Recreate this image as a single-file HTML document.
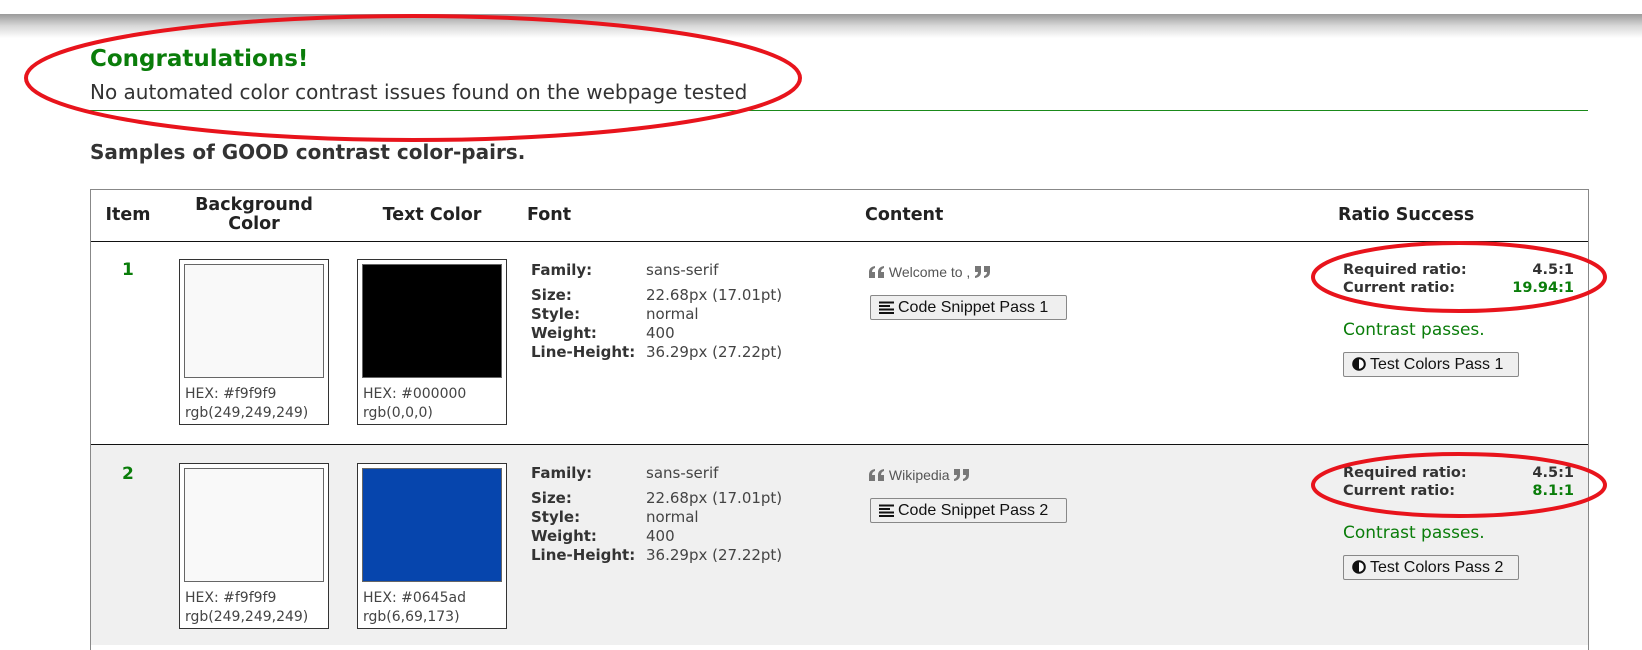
<!DOCTYPE html>
<html><head><meta charset="utf-8"><style>
body{margin:0;width:1642px;height:644px;overflow:hidden;background:#fff;position:relative;font-family:"DejaVu Sans","Liberation Sans",sans-serif;color:#333}
.a{position:absolute;white-space:nowrap}
.band{position:absolute;left:0;top:14px;width:1642px;height:24px;background:linear-gradient(#9a9a9a,#d8d8d8 50%,#fff)}
.h{font-weight:bold;font-size:17.5px;color:#222;text-align:center;line-height:19px}
.box{position:absolute;width:148px;height:164px;border:1px solid #333;background:#fff}
.sw{position:absolute;left:4px;top:4px;width:138px;height:112px;border:1px solid #666}
.box .t{position:absolute;left:5px;font-size:14px;color:#444}
.lab{font-weight:bold;font-size:15px;color:#333}
.val{font-size:15px;color:#444}
.btn{position:absolute;height:25px;border:1px solid #888;border-radius:2px;background:#efefef;font-family:"Liberation Sans",sans-serif;font-size:16px;color:#111;line-height:24px;box-sizing:border-box;padding-left:8px}
.btn svg{vertical-align:-2px;margin-right:4px}
.q{font-family:"Liberation Sans",sans-serif;font-size:14px;color:#555}
.q svg{vertical-align:-1px}
.r{font-weight:bold;font-size:14.5px;color:#333}
</style></head><body>
<div class="band"></div>
<div class="a" style="left:90px;top:46px;font-size:23px;font-weight:bold;color:#0a7d0a">Congratulations!</div>
<div class="a" style="left:90px;top:80px;font-size:20px;color:#333">No automated color contrast issues found on the webpage tested</div>
<div class="a" style="left:90px;top:110px;width:1498px;height:1px;background:#1a8a1a"></div>
<div class="a" style="left:90px;top:140px;font-size:20px;font-weight:bold;color:#333">Samples of GOOD contrast color-pairs.</div>

<div class="a" style="left:90px;top:189px;width:1497px;height:460px;border:1px solid #888;border-bottom:none"></div>
<div class="a" style="left:91px;top:241px;width:1497px;height:1px;background:#111"></div>
<div class="a" style="left:91px;top:444px;width:1497px;height:1px;background:#111"></div>
<div class="a" style="left:91px;top:445px;width:1497px;height:200px;background:#f0f0f0"></div>

<div class="a h" style="left:98px;top:206px;width:60px">Item</div>
<div class="a h" style="left:184px;top:196px;width:140px">Background<br>Color</div>
<div class="a h" style="left:370px;top:206px;width:124px">Text Color</div>
<div class="a h" style="left:527px;top:206px;text-align:left">Font</div>
<div class="a h" style="left:865px;top:206px;text-align:left">Content</div>
<div class="a h" style="left:1338px;top:206px;text-align:left">Ratio Success</div>

<!-- row 1 -->
<div class="a" style="left:122px;top:260px;font-weight:bold;font-size:17px;color:#0a7d0a">1</div>
<div class="box" style="left:179px;top:259px"><div class="sw" style="background:#f9f9f9"></div><div class="t" style="top:126px">HEX: #f9f9f9</div><div class="t" style="top:145px">rgb(249,249,249)</div></div>
<div class="box" style="left:357px;top:259px"><div class="sw" style="background:#000"></div><div class="t" style="top:126px">HEX: #000000</div><div class="t" style="top:145px">rgb(0,0,0)</div></div>
<div class="a lab" style="left:531px;top:261px;line-height:19px">Family:<br><span style="display:block;height:6px"></span>Size:<br>Style:<br>Weight:<br>Line-Height:</div>
<div class="a val" style="left:646px;top:261px;line-height:19px">sans-serif<br><span style="display:block;height:6px"></span>22.68px (17.01pt)<br>normal<br>400<br>36.29px (27.22pt)</div>
<div class="a q" style="left:869px;top:264px"><svg width="16" height="12" viewBox="0 0 16 12"><path d="M0 12V6Q0 1 6 0V2Q3 3 3 6H6V12ZM9 12V6Q9 1 15 0V2Q12 3 12 6H15V12Z" fill="#777"/></svg> Welcome to , <svg width="16" height="12" viewBox="0 0 16 12"><path d="M1 0H7V6Q7 11 1 12V10Q4 9 4 6H1ZM10 0H16V6Q16 11 10 12V10Q13 9 13 6H10Z" fill="#777"/></svg></div>
<div class="btn" style="left:870px;top:295px;width:197px"><svg width="15" height="13"><path d="M0 1.5H15M0 5H11M0 8.5H15M0 12H15" stroke="#111" stroke-width="2"/></svg>Code Snippet Pass 1</div>
<div class="a r" style="left:1343px;top:262px">Required ratio:</div><div class="a r" style="left:1500px;top:262px;width:74px;text-align:right">4.5:1</div>
<div class="a r" style="left:1343px;top:280px">Current ratio:</div><div class="a r" style="left:1489px;top:280px;width:85px;text-align:right;color:#0a7d0a">19.94:1</div>
<div class="a" style="left:1343px;top:320px;font-size:17px;color:#0a7d0a">Contrast passes.</div>
<div class="btn" style="left:1343px;top:352px;width:176px"><svg width="14" height="14"><circle cx="7" cy="7" r="5.8" fill="#fff" stroke="#111" stroke-width="2"/><path d="M7 1A6 6 0 0 0 7 13Z" fill="#111"/></svg>Test Colors Pass 1</div>

<!-- row 2 -->
<div class="a" style="left:122px;top:464px;font-weight:bold;font-size:17px;color:#0a7d0a">2</div>
<div class="box" style="left:179px;top:463px"><div class="sw" style="background:#f9f9f9"></div><div class="t" style="top:126px">HEX: #f9f9f9</div><div class="t" style="top:145px">rgb(249,249,249)</div></div>
<div class="box" style="left:357px;top:463px"><div class="sw" style="background:#0645ad"></div><div class="t" style="top:126px">HEX: #0645ad</div><div class="t" style="top:145px">rgb(6,69,173)</div></div>
<div class="a lab" style="left:531px;top:464px;line-height:19px">Family:<br><span style="display:block;height:6px"></span>Size:<br>Style:<br>Weight:<br>Line-Height:</div>
<div class="a val" style="left:646px;top:464px;line-height:19px">sans-serif<br><span style="display:block;height:6px"></span>22.68px (17.01pt)<br>normal<br>400<br>36.29px (27.22pt)</div>
<div class="a q" style="left:869px;top:467px"><svg width="16" height="12" viewBox="0 0 16 12"><path d="M0 12V6Q0 1 6 0V2Q3 3 3 6H6V12ZM9 12V6Q9 1 15 0V2Q12 3 12 6H15V12Z" fill="#777"/></svg> Wikipedia <svg width="16" height="12" viewBox="0 0 16 12"><path d="M1 0H7V6Q7 11 1 12V10Q4 9 4 6H1ZM10 0H16V6Q16 11 10 12V10Q13 9 13 6H10Z" fill="#777"/></svg></div>
<div class="btn" style="left:870px;top:498px;width:197px"><svg width="15" height="13"><path d="M0 1.5H15M0 5H11M0 8.5H15M0 12H15" stroke="#111" stroke-width="2"/></svg>Code Snippet Pass 2</div>
<div class="a r" style="left:1343px;top:465px">Required ratio:</div><div class="a r" style="left:1500px;top:465px;width:74px;text-align:right">4.5:1</div>
<div class="a r" style="left:1343px;top:483px">Current ratio:</div><div class="a r" style="left:1489px;top:483px;width:85px;text-align:right;color:#0a7d0a">8.1:1</div>
<div class="a" style="left:1343px;top:523px;font-size:17px;color:#0a7d0a">Contrast passes.</div>
<div class="btn" style="left:1343px;top:555px;width:176px"><svg width="14" height="14"><circle cx="7" cy="7" r="5.8" fill="#fff" stroke="#111" stroke-width="2"/><path d="M7 1A6 6 0 0 0 7 13Z" fill="#111"/></svg>Test Colors Pass 2</div>

<svg class="a" style="left:0;top:0" width="1642" height="644">
<g fill="none" stroke="#e8141c" stroke-width="4">
<ellipse cx="413" cy="78" rx="387" ry="62"/>
<ellipse cx="1459" cy="277" rx="146" ry="34"/>
<ellipse cx="1459" cy="485" rx="146" ry="31"/>
</g></svg>
</body></html>
